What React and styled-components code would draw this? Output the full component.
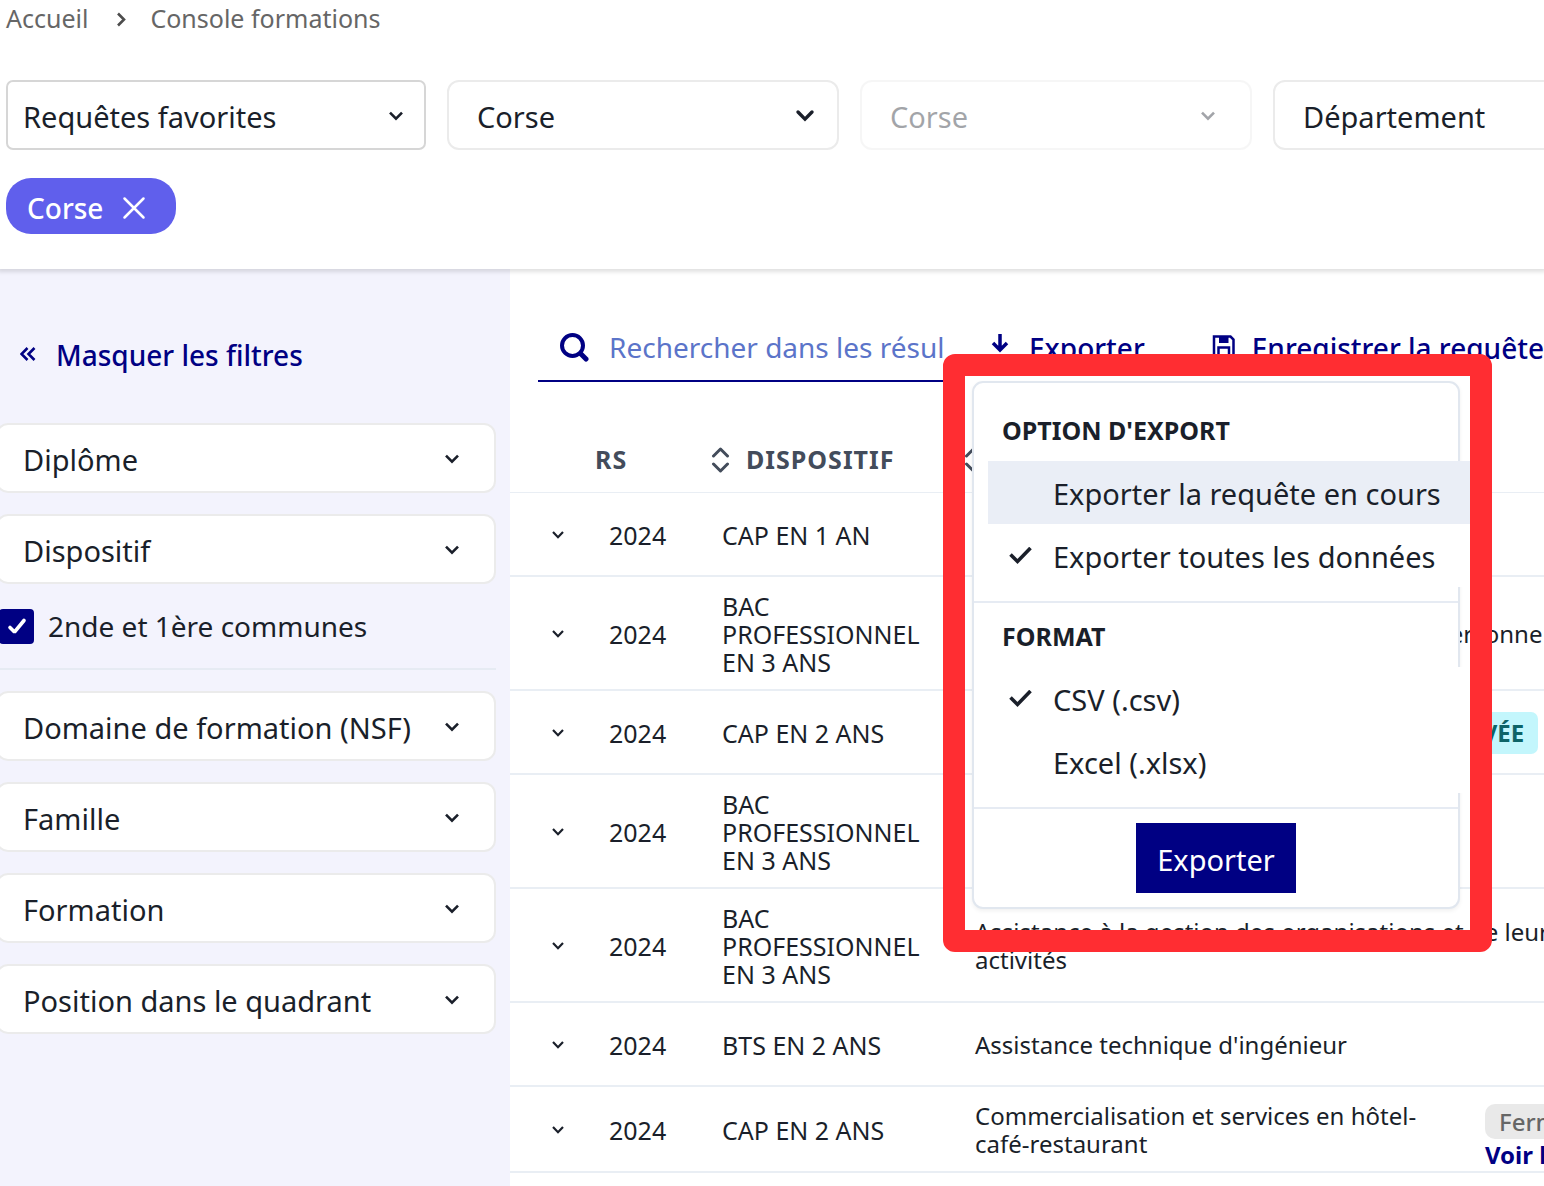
import React from "react";
import styled, { createGlobalStyle } from "styled-components";

const c = {
  text: "#1a1f2a",
  blue: "#000083",
  line: "#e9eef4",
  border: "#ebebeb",
};

const Global = createGlobalStyle`
  *, *::before, *::after { box-sizing: border-box; }
  html, body, #root { height: 100%; }
  body {
    margin: 0;
    background: #fff;
    color: ${c.text};
    font-family: "Noto Sans", "Open Sans", sans-serif;
    font-size: 28px;
    line-height: 40px;
    overflow: hidden;
  }
  button, input, select { font: inherit; color: inherit; margin: 0; }
  svg { display: block; flex: none; }
`;

const Page = styled.div`
  display: flex;
  flex-direction: column;
  min-height: 100%;
  overflow: hidden;
`;

const Header = styled.header`
  position: relative;
  z-index: 1;
  padding: 0 0 35px 6px;
  background: #fff;
  box-shadow: 0 1px 4px 2px rgba(0, 0, 0, 0.12);
`;

const Breadcrumb = styled.nav`
  display: flex;
  align-items: center;
  gap: 20px;
  height: 36px;
  margin-bottom: 44px;
  color: #666;
  font-size: 25px;
  line-height: 28px;

  a { color: inherit; text-decoration: none; }
`;

const Filters = styled.div`
  display: flex;
  gap: 21px;
`;

const Field = styled.div`
  display: grid;
  flex: none;
  align-items: center;
  width: ${(p) => p.$width || "auto"};
  opacity: ${(p) => (p.$faded ? 0.4 : 1)};

  > * { grid-area: 1 / 1; }
  > svg {
    justify-self: end;
    margin-right: ${(p) => p.$end || 30}px;
    pointer-events: none;
  }
`;

const Select = styled.select`
  appearance: none;
  width: 100%;
  height: 70px;
  padding: 4px 56px 0 ${(p) => p.$start || 28}px;
  border: 2px solid ${(p) => (p.$strong ? "#d6d6d6" : c.border)};
  border-radius: ${(p) => (p.$strong ? 7 : 12)}px;
  background: #fff;
  font-size: 29px;
  opacity: 1;
`;

const Chip = styled.button`
  display: inline-flex;
  align-items: center;
  gap: 19px;
  height: 56px;
  margin-top: 28px;
  padding: 4px 30px 0 21px;
  border: 0;
  border-radius: 25px;
  background: #605fec;
  color: #fff;
  font-weight: 500;
`;

const Body = styled.div`
  display: flex;
  flex: 1;
`;

const Sidebar = styled.aside`
  display: flex;
  flex-direction: column;
  flex: none;
  gap: 21px;
  width: 514px;
  margin-left: -4px;
  padding: 51px 14px 0 0;
  background: #f3f3fd;
`;

const HideButton = styled.button`
  display: flex;
  align-items: center;
  align-self: flex-start;
  gap: 20px;
  height: 70px;
  margin-bottom: 12px;
  padding: 0 24px;
  border: 0;
  background: none;
  color: ${c.blue};
  font-weight: 500;
`;

const CheckLabel = styled.label`
  display: flex;
  align-items: center;
  gap: 14px;
  height: 42px;
  padding-left: 3px;
`;

const CheckBox = styled.span`
  display: grid;
  place-items: center;

  > * { grid-area: 1 / 1; }
  input {
    appearance: none;
    width: 35px;
    height: 35px;
    border-radius: 4px;
    background: ${c.blue};
  }
  svg { pointer-events: none; }
`;

const Divider = styled.hr`
  width: 100%;
  height: 2px;
  margin: 0;
  border: 0;
  background: #e6ebf3;
`;

const Main = styled.main`
  flex: 1;
  min-width: 0;
  padding-top: 45px;
`;

const Toolbar = styled.div`
  display: flex;
  align-items: center;
  gap: 14px;
  padding-left: 28px;
`;

const Search = styled.label`
  display: flex;
  align-items: center;
  flex: none;
  gap: 20px;
  width: 420px;
  height: 68px;
  padding: 0 14px 0 21px;
  border-bottom: 2px solid ${c.blue};
`;

const SearchInput = styled.input`
  flex: 1;
  min-width: 0;
  height: 60px;
  padding: 0;
  border: 0;
  outline: 0;
  background: none;
  text-overflow: clip;

  &::placeholder { color: #5b74c9; opacity: 1; }
`;

const ExportArea = styled.div`
  position: relative;
  flex: none;
  margin-right: 16px;
`;

const ToolButton = styled.button`
  display: flex;
  align-items: center;
  flex: none;
  gap: 17px;
  height: 66px;
  padding: 0 20px 0 16px;
  border: 0;
  background: none;
  color: ${c.blue};
  font-weight: 500;
  white-space: nowrap;
`;

const Highlight = styled.div`
  position: absolute;
  z-index: 2;
  top: 39px;
  left: -29px;
  width: 549px;
  padding: 5px 10px 21px 7px;
  border: 22px solid #ff2d32;
  border-radius: 12px;
  overflow: hidden;
`;

const Menu = styled.div`
  display: flex;
  flex-direction: column;
  padding: 14px 0;
  border: 2px solid #e1e7ef;
  border-radius: 11px;
  background: #fff;
  box-shadow: 0 2px 4px rgba(0, 0, 0, 0.06);
  font-size: 29px;
`;

const Group = styled.div`
  padding: 0 14px;
  margin-bottom: 14px;
`;

const GroupTitle = styled.div`
  display: flex;
  align-items: center;
  height: 64px;
  padding: 2px 0 0 14px;
  font-size: 25px;
  font-weight: 700;
`;

const MenuItem = styled.button`
  display: grid;
  grid-template-columns: 24px 1fr;
  align-items: center;
  gap: 20px;
  width: 500px;
  height: 63px;
  padding: 2px 21px 0;
  border: 0;
  background: ${(p) => (p.$active ? "#eaeef6" : "#fff")};
  text-align: left;
  white-space: nowrap;

  span { grid-column: 2; grid-row: 1; }
`;

const Submit = styled.button`
  align-self: center;
  height: 70px;
  margin-top: 14px;
  padding: 4px 21px 0;
  border: 0;
  background: ${c.blue};
  color: #fff;
`;

const Table = styled.table`
  width: 100%;
  min-width: 1240px;
  margin-top: 44px;
  border-collapse: separate;
  border-spacing: 0;
  table-layout: fixed;
  font-size: 25px;
  line-height: 28px;
`;

const Th = styled.th`
  width: ${(p) => p.$width || "auto"};
  height: 67px;
  padding: 0 0 0 14px;
  border-bottom: 1px solid ${c.line};
  color: #434c5b;
  font-weight: 700;
  letter-spacing: 1px;
  text-align: left;
`;

const Sortable = styled.span`
  display: flex;
  align-items: center;
  gap: 14px;
`;

const Td = styled.td`
  padding: 15px 0 13px 28px;
  border-bottom: 2px solid ${c.line};
  vertical-align: middle;
`;

const Expand = styled.button`
  display: grid;
  place-items: center;
  width: 40px;
  height: 54px;
  padding: 0 0 2px;
  border: 0;
  background: none;
`;

const Course = styled.div`
  display: flex;
  align-items: center;
  height: ${(p) => (p.$tall ? "56px" : "auto")};
  font-size: 24px;
`;

const CourseName = styled.span`
  flex: ${(p) => (p.$wrap ? "0 0 510px" : "0 1 auto")};
  max-width: 664px;
  padding-right: 17px;
`;

const Badge = styled.span`
  flex: none;
  padding: 7px 14px;
  border-radius: 7px;
  background: #c3f6fc;
  color: #0d6467;
  font-weight: 700;
`;

const Status = styled.div`
  display: flex;
  flex-direction: column;
  align-items: flex-start;
  gap: 2px;
  margin-top: 12px;
  white-space: nowrap;

  a { color: ${c.blue}; font-weight: 700; text-decoration: none; }
`;

const Closed = styled.span`
  height: 35px;
  padding: 4px 14px;
  border-radius: 10px;
  background: #e9e9e9;
  color: #666;
  font-weight: 500;
`;

const Chevron = ({ w = 13, stroke = 2.6, box = 28, cap = "butt" }) => (
  <svg width={box} height={w + 2} viewBox={`${-box / 2} ${-w / 2 - 1} ${box} ${w + 2}`} fill="none" stroke="currentColor" strokeWidth={stroke} strokeLinejoin="miter" strokeLinecap={cap}>
    <path d={`M${-w / 2 + 0.5} ${-w / 4 + 0.3} L0 ${w / 4 - 0.1} L${w / 2 - 0.5} ${-w / 4 + 0.3}`} />
  </svg>
);

const Check = () => (
  <svg width="24" height="20" viewBox="0 1.500 24 20" fill="none" stroke="currentColor" strokeWidth="3.600">
    <path d="M1.500 9 L8.500 16 L21.500 2.500" />
  </svg>
);

const SortIcon = () => (
  <svg width="24" height="28" viewBox="0 0 24 28" fill="none" stroke="currentColor" strokeWidth="3" strokeLinecap="round" strokeLinejoin="round">
    <path d="M5.500 11 L12.500 4 L19.500 11 M5.500 19 L12.500 26 L19.500 19" />
  </svg>
);

const DropDown = ({ label, start = 28, end = 30, width, strong, faded, chevron }) => (
  <Field $width={width} $end={end} $faded={faded}>
    <Select aria-label={label} $start={start} $strong={strong} disabled={faded} defaultValue={label}>
      <option>{label}</option>
    </Select>
    <Chevron {...chevron} />
  </Field>
);

const Option = ({ label, checked, active }) => (
  <MenuItem type="button" role="menuitemradio" aria-checked={!!checked} $active={active}>
    {checked && <Check />}
    <span>{label}</span>
  </MenuItem>
);

const rows = [
  { level: "CAP EN 1 AN", name: "Accessoiriste réalisateur" },
  { level: "BAC PROFESSIONNEL EN 3 ANS", name: "Accompagnement , soins et services à la personne" },
  { level: "CAP EN 2 ANS", name: "Accordeur de pianos, option claviers", badge: "RÉNOVÉE" },
  { level: "BAC PROFESSIONNEL EN 3 ANS", name: "Agencement de l'espace" },
  { level: "BAC PROFESSIONNEL EN 3 ANS", name: "Assistance à la gestion des organisations et de leurs activités" },
  { level: "BTS EN 2 ANS", name: "Assistance technique d'ingénieur" },
  { level: "CAP EN 2 ANS", name: "Commercialisation et services en hôtel-café-restaurant", closed: true },
];

export default function App() {
  return (
    <Page>
      <Global />
      <Header>
        <Breadcrumb aria-label="Fil d'Ariane">
          <a href="#accueil">Accueil</a>
          <svg width="22" height="18" viewBox="0 0 22 18" fill="none" stroke="#4d4d4d" strokeWidth="2.600">
            <path d="M10 4.500 L16 10.500 L10 16.500" />
          </svg>
          <a href="#console">Console formations</a>
        </Breadcrumb>
        <Filters>
          <DropDown label="Requêtes favorites" width="420px" start={15} end={16} strong />
          <DropDown label="Corse" width="392px" end={20} chevron={{ w: 15, stroke: 3.4, cap: "round" }} />
          <DropDown label="Corse" width="392px" faded />
          <DropDown label="Département" width="392px" />
        </Filters>
        <Chip type="button">
          Corse
          <svg width="24" height="24" viewBox="0 0 24 24" stroke="currentColor" strokeWidth="2.500" strokeLinecap="round">
            <path d="M2.500 2.500 L21.500 21.500 M21.500 2.500 L2.500 21.500" />
          </svg>
        </Chip>
      </Header>
      <Body>
        <Sidebar>
          <HideButton type="button">
            <svg width="16" height="16" viewBox="0 0 16 16" fill="none" stroke="currentColor" strokeWidth="2.600">
              <path d="M7.500 1 L1.500 7 L7.500 13 M14.500 1 L8.500 7 L14.500 13" />
            </svg>
            Masquer les filtres
          </HideButton>
          <DropDown label="Diplôme" start={25} />
          <DropDown label="Dispositif" start={25} />
          <CheckLabel>
            <CheckBox>
              <input type="checkbox" defaultChecked />
              <svg width="20" height="18" viewBox="0 0 20 18" fill="none" stroke="#fff" strokeWidth="3.600" strokeLinecap="round">
                <path d="M3 10.500 L7 14.500 H8 L17 3.500" />
              </svg>
            </CheckBox>
            2nde et 1ère communes
          </CheckLabel>
          <Divider />
          <DropDown label="Domaine de formation (NSF)" start={25} />
          <DropDown label="Famille" start={25} />
          <DropDown label="Formation" start={25} />
          <DropDown label="Position dans le quadrant" start={25} />
        </Sidebar>
        <Main>
          <Toolbar>
            <Search>
              <svg width="30" height="30" viewBox="0 0 30 30" fill="none" stroke={c.blue} strokeLinecap="round">
                <circle cx="13.500" cy="13.500" r="10.500" strokeWidth="4" />
                <path d="M21.500 21.500 L27 27" strokeWidth="5" />
              </svg>
              <SearchInput type="text" aria-label="Rechercher" placeholder="Rechercher dans les résultats" />
            </Search>
            <ExportArea>
              <ToolButton type="button">
                <svg width="24" height="24" viewBox="0 0 24 24" overflow="visible" fill="none" stroke="currentColor" strokeWidth="3.500">
                  <path d="M12 -2 V13 M5 7 L12 14 L19 7" />
                </svg>
                Exporter
              </ToolButton>
              <Highlight>
                <Menu role="menu">
                  <Group>
                    <GroupTitle>OPTION D'EXPORT</GroupTitle>
                    <Option label="Exporter la requête en cours" active />
                    <Option label="Exporter toutes les données" checked />
                  </Group>
                  <Divider />
                  <Group>
                    <GroupTitle>FORMAT</GroupTitle>
                    <Option label="CSV (.csv)" checked />
                    <Option label="Excel (.xlsx)" />
                  </Group>
                  <Divider />
                  <Submit type="button">Exporter</Submit>
                </Menu>
              </Highlight>
            </ExportArea>
            <ToolButton type="button">
              <svg width="24" height="24" viewBox="0 2 24 24" overflow="visible" fill="none" stroke="currentColor" strokeWidth="2.500">
                <path d="M3 2.500 H19.500 L22.500 5.500 V22 H3 Z" />
                <path d="M8 2 V9 H17.500 V2 Z" fill="currentColor" stroke="none" />
                <path d="M7.500 22 V13.500 H18 V22" />
              </svg>
              Enregistrer la requête
            </ToolButton>
          </Toolbar>
          <Table>
            <thead>
              <tr>
                <Th $width="71px" aria-label="Détails" />
                <Th $width="113px">RS</Th>
                <Th $width="253px"><Sortable><SortIcon />DISPOSITIF</Sortable></Th>
                <Th><Sortable><SortIcon />FORMATION</Sortable></Th>
              </tr>
            </thead>
            <tbody>
              {rows.map((r, i) => (
                <tr key={i}>
                  <Td>
                    <Expand type="button" aria-label="Déplier">
                      <Chevron w={11} stroke={2.2} />
                    </Expand>
                  </Td>
                  <Td>2024</Td>
                  <Td>{r.level}</Td>
                  <Td>
                    <Course $tall={r.closed}>
                      <CourseName $wrap={r.closed}>{r.name}</CourseName>
                      {r.badge && <Badge>{r.badge}</Badge>}
                      {r.closed && (
                        <Status>
                          <Closed>Fermeture</Closed>
                          <a href="#detail">Voir le détail</a>
                        </Status>
                      )}
                    </Course>
                  </Td>
                </tr>
              ))}
            </tbody>
          </Table>
        </Main>
      </Body>
    </Page>
  );
}
